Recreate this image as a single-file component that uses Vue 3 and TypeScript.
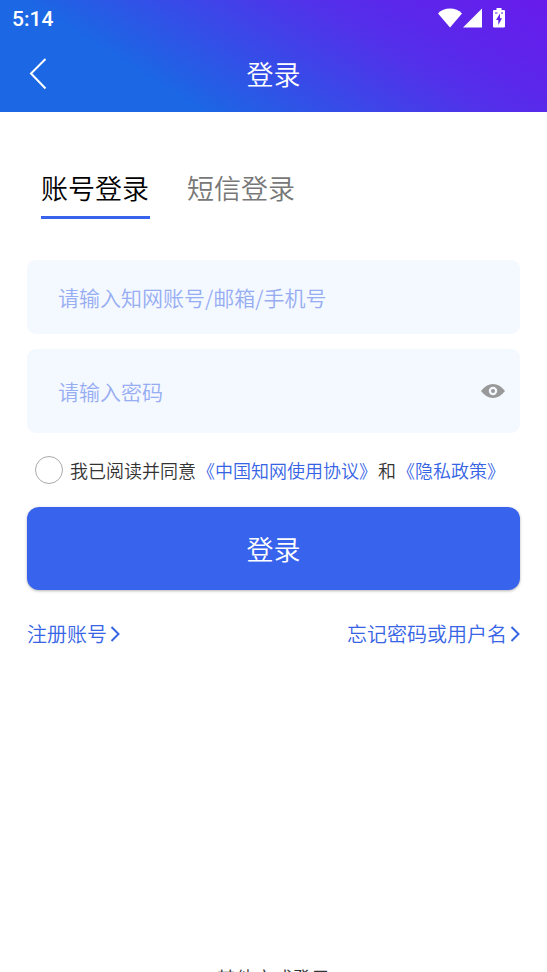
<script setup lang="ts">
import { ref } from 'vue'

type LoginMode = 'account' | 'sms'

const tabs: { id: LoginMode; label: string }[] = [
  { id: 'account', label: '账号登录' },
  { id: 'sms', label: '短信登录' },
]
const mode = ref<LoginMode>('account')
const account = ref('')
const password = ref('')
const showPassword = ref(false)
const agreed = ref(false)
</script>

<template>
  <div class="page">
    <header class="header">
      <div class="status">
        <span class="time">5:14</span>
        <div class="indicators">
          <svg class="wifi" viewBox="0 0 24 20" aria-hidden="true">
            <path d="M0 5.500C3 2.300 7.300.5 12 .5s9 1.800 12 5L12 19.500z" />
          </svg>
          <svg class="signal" viewBox="0 0 19 20" aria-hidden="true">
            <path d="M19 .5V19.500H0z" />
          </svg>
          <svg class="battery" viewBox="0 0 12 20" aria-hidden="true">
            <path fill-rule="evenodd" d="M3.500 0h5v2H11a1 1 0 0 1 1 1v15.500a1 1 0 0 1-1 1H1a1 1 0 0 1-1-1V3a1 1 0 0 1 1-1h2.500zM7 5.500 3 12H5.300v5L9 10.300H7zM2 4.500v1h2.500v-1zM8 4.500v1h2v-1z" />
          </svg>
        </div>
      </div>
      <div class="titlebar">
        <button class="back" type="button" aria-label="返回">
          <svg viewBox="0 0 18 32" aria-hidden="true"><path d="M16.500 1 2 15.500 16.500 30.500" /></svg>
        </button>
        <h1>登录</h1>
      </div>
    </header>

    <main class="content">
      <nav class="tabs">
        <button
          v-for="tab in tabs"
          :key="tab.id"
          type="button"
          class="tab"
          :class="{ active: mode === tab.id }"
          @click="mode = tab.id"
        >{{ tab.label }}</button>
      </nav>

      <form class="form" @submit.prevent>
        <div class="field">
          <input v-model="account" type="text" aria-label="账号" placeholder="请输入知网账号/邮箱/手机号" />
        </div>
        <div class="field tall">
          <input v-model="password" :type="showPassword ? 'text' : 'password'" aria-label="密码" placeholder="请输入密码" />
          <button class="eye" type="button" aria-label="显示密码" @click="showPassword = !showPassword">
            <svg viewBox="0 0 24 14" aria-hidden="true">
              <path fill-rule="evenodd" d="M0 7C3.500 2.300 7.500 0 12 0s8.500 2.300 12 7c-3.500 4.700-7.500 7-12 7S3.500 11.700 0 7zM12 2.800a4.200 4.200 0 1 0 0 8.400 4.200 4.200 0 0 0 0-8.400z" />
              <circle cx="12" cy="7" r="2" />
            </svg>
          </button>
        </div>
        <div class="agreement">
          <input id="agree" v-model="agreed" type="checkbox" />
          <label for="agree">我已阅读并同意</label>
          <a href="#terms">《中国知网使用协议》</a>
          <span>和</span>
          <a href="#privacy">《隐私政策》</a>
        </div>
        <button class="submit" type="submit">登录</button>
      </form>

      <div class="links">
        <a href="#register">注册账号<svg viewBox="0 0 10 16" aria-hidden="true"><path d="M1.500 1 8.500 8l-7 7" /></svg></a>
        <a href="#forgot">忘记密码或用户名<svg viewBox="0 0 10 16" aria-hidden="true"><path d="M1.500 1 8.500 8l-7 7" /></svg></a>
      </div>
    </main>

    <footer class="others">其他方式登录</footer>
  </div>
</template>

<style>
body {
  margin: 0;
  background: #fff;
}
</style>

<style scoped>
.page {
  display: flex;
  flex-direction: column;
  height: 100vh;
  overflow: hidden;
  background: #fff;
  color: #333;
  font-family: "Noto Sans CJK SC", sans-serif;
  font-weight: 350;
}
button,
input {
  margin: 0;
  padding: 0;
  border: 0;
  background: none;
  color: inherit;
  font-family: inherit;
  font-weight: inherit;
}
a {
  color: #3664e5;
  text-decoration: none;
}
.header {
  flex: none;
  color: #fff;
  background: linear-gradient(32deg, #1b67e4 0%, #1b67e4 28%, #3a48e8 50%, #5330ea 68%, #5c26eb 80%, #681bec 100%);
}
.status {
  display: flex;
  align-items: center;
  justify-content: space-between;
  height: 36px;
  padding: 0 42px 0 12px;
}
.time {
  padding-top: 2px;
  font: 500 21px/24px Roboto, sans-serif;
}
.indicators {
  display: flex;
}
.indicators svg {
  height: 20px;
  fill: #fff;
}
.wifi {
  width: 24px;
}
.signal {
  width: 19px;
  margin-left: 1px;
}
.battery {
  width: 12px;
  margin-left: 11px;
}
.titlebar {
  display: grid;
  grid-template-columns: 76px 1fr 76px;
  align-items: center;
  height: 76px;
}
.back {
  display: flex;
  padding-left: 29px;
}
.back svg {
  width: 18px;
  height: 32px;
  fill: none;
  stroke: #fff;
  stroke-width: 2;
}
h1 {
  margin: 0;
  font-size: 27px;
  font-weight: inherit;
  line-height: 40px;
  text-align: center;
}
.content {
  padding: 56px 27px 0;
}
.tabs {
  display: flex;
  gap: 37px;
  padding: 0 14px;
}
.tab {
  padding: 0 1px 8px 0;
  border-bottom: 3px solid transparent;
  font-size: 27px;
  line-height: 40px;
  color: #777;
}
.tab.active {
  color: #000;
  border-color: #3763ed;
}
.form {
  display: flex;
  flex-direction: column;
  margin-top: 41px;
}
.field {
  display: flex;
  align-items: center;
  height: 74px;
  margin-bottom: 15px;
  padding: 0 15px 0 31px;
  border-radius: 9px;
  background: #f4f8ff;
}
.field.tall {
  height: 84px;
}
.field input {
  flex: 1;
  min-width: 0;
  height: 40px;
  font-size: 21px;
  color: #333;
  outline: none;
}
.field input::placeholder {
  color: #96adf3;
  opacity: 1;
}
.eye {
  display: flex;
}
.eye svg {
  width: 24px;
  height: 14px;
  fill: #999;
}
.agreement {
  display: flex;
  align-items: center;
  gap: 1px;
  height: 44px;
  padding-left: 8px;
  font-size: 18px;
  white-space: nowrap;
}
.agreement input {
  appearance: none;
  box-sizing: border-box;
  width: 28px;
  height: 28px;
  margin-right: 6px;
  border: 1px solid #aaa;
  border-radius: 50%;
}
.agreement input:checked {
  border: 8px solid #3763ed;
}
.submit {
  height: 83px;
  margin-top: 15px;
  border-radius: 12px;
  background: #3763ed;
  box-shadow: 0 1px 3px rgba(0, 0, 0, 0.3);
  color: #fff;
  font-size: 27px;
}
.links {
  display: flex;
  justify-content: space-between;
  margin-top: 29px;
  font-size: 20px;
  line-height: 30px;
}
.links a {
  display: flex;
  align-items: center;
  gap: 3px;
}
.links svg {
  width: 10px;
  height: 16px;
  fill: none;
  stroke: #3664e5;
  stroke-width: 2;
}
.others {
  margin-top: auto;
  margin-bottom: -20px;
  font-size: 19px;
  line-height: 28px;
  text-align: center;
}
</style>
